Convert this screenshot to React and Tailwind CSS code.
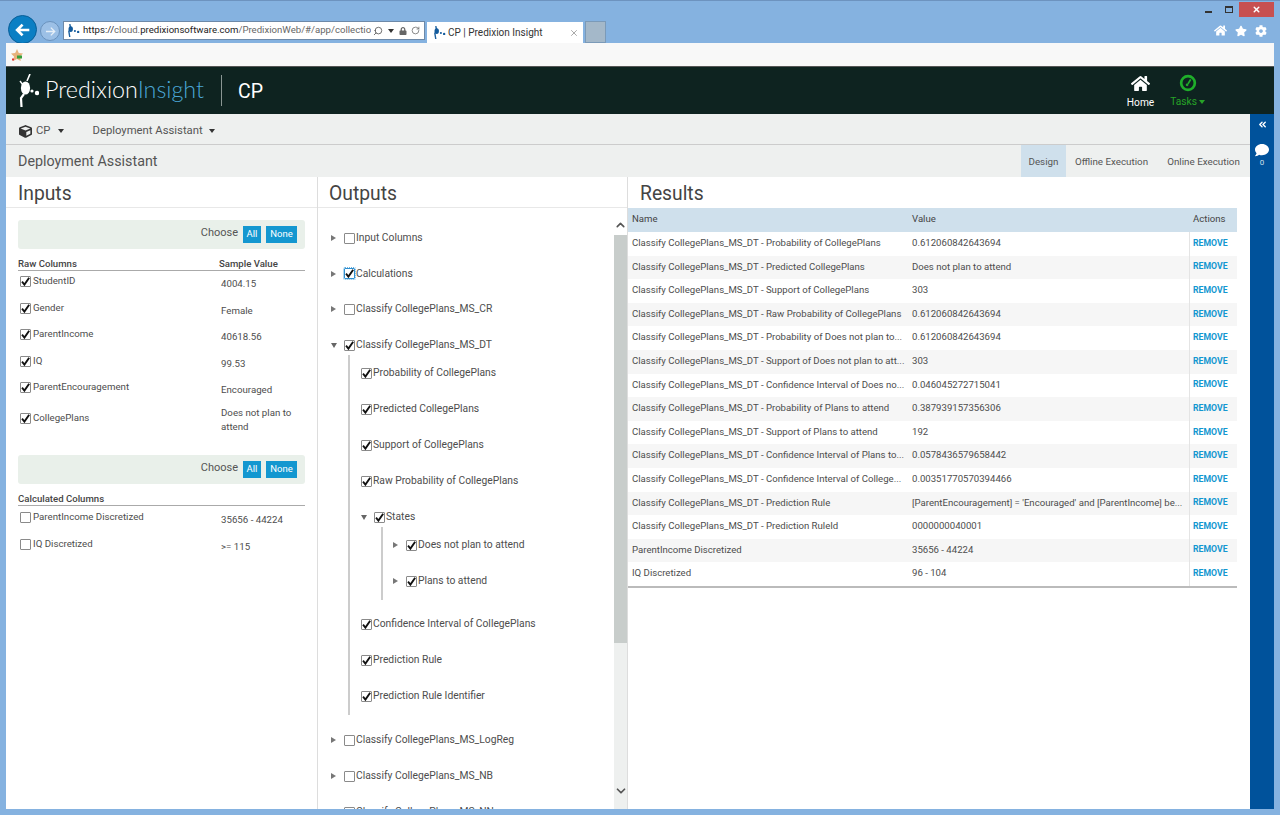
import React from "react";
import { ChevronUp, ChevronDown, ChevronsLeft, RotateCw, Search, X } from "lucide-react";
import { FaHome, FaStar, FaCog, FaComment, FaCube, FaLock } from "react-icons/fa";

const Check = ({ checked, focus }) => (
  <span className={`inline-flex shrink-0 w-[11px] h-[11px] border rounded-[1px] bg-white items-center justify-center ${focus ? "border-[#2f8fd0] outline outline-1 outline-dotted outline-[#6ab0de]" : "border-[#8a8a8a]"}`}>
    {checked && (
      <svg viewBox="0 0 12 12" className="w-[11px] h-[11px] overflow-visible">
        <path d="M2.2 6.2 L4.8 9.4 L10 1.8" fill="none" stroke="#111" strokeWidth="2" />
      </svg>
    )}
  </span>
);

const Logo = ({ small }) => small ? (
  <svg viewBox="0 0 14 14" className="w-[13px] h-[13px] shrink-0">
    <path d="M3 0 L4 5 L2 8 L3 14" stroke="#1b5f9e" strokeWidth="1.5" fill="none" />
    <ellipse cx="4" cy="5.5" rx="2.4" ry="3.2" fill="#125a9c" />
    <circle cx="8.5" cy="7.5" r="1.1" fill="#125a9c" />
    <circle cx="12" cy="8.5" r="1.3" fill="#125a9c" />
  </svg>
) : (
  <svg viewBox="0 0 20 34" className="w-[20px] h-[34px] shrink-0">
    <path d="M11 0 L8 7" stroke="#fff" strokeWidth="1.6" />
    <path d="M1 7 L4 11" stroke="#fff" strokeWidth="1.4" />
    <ellipse cx="6.5" cy="14" rx="4.6" ry="6.6" fill="#fff" />
    <path d="M5 20 L2 24 L2.5 33" stroke="#fff" strokeWidth="2.2" fill="none" />
    <circle cx="13" cy="17" r="1.6" fill="#fff" />
    <circle cx="18" cy="19" r="2.2" fill="#fff" />
  </svg>
);

const Tri = ({ open }) => (
  <span className={`inline-block w-0 h-0 ${open ? "border-l-[3px] border-r-[3px] border-t-[5px] border-l-transparent border-r-transparent border-t-[#666]" : "border-t-[3px] border-b-[3px] border-l-[5px] border-t-transparent border-b-transparent border-l-[#777]"}`} />
);

const Caret = () => <span className="inline-block w-0 h-0 border-l-[3.5px] border-r-[3.5px] border-t-[4px] border-l-transparent border-r-transparent border-t-[#333]" />;

const raw = [
  ["StudentID", "4004.15", "h-[26.5px]"],
  ["Gender", "Female", "h-[26.5px]"],
  ["ParentIncome", "40618.56", "h-[26.5px]"],
  ["IQ", "99.53", "h-[26.5px]"],
  ["ParentEncouragement", "Encouraged", "h-[31px]"],
  ["CollegePlans", "Does not plan to attend", "h-[38px]", true],
];

const InputRow = ({ name, val, h, checked = true, raised }) => (
  <div className={`flex ${h}`}>
    <div className="w-[201px] flex gap-[2px] pl-[2px] text-[9.7px] leading-[12px] text-[#4d4d4d] items-start pt-[4px]">
      <span className="pt-[1px] flex"><Check checked={checked} /></span>
      <span>{name}</span>
    </div>
    <div className={`w-[84px] text-[9.7px] leading-[14px] text-[#4d4d4d] pl-[2px] ${raised ? "-mt-[2px]" : "pt-[6px]"}`}>{val}</div>
  </div>
);

const Choose = ({ className }) => (
  <div className={`h-[29px] rounded-[3px] bg-[#e9f0ea] flex items-center justify-end gap-[5px] pr-[8px] ${className}`}>
    <span className="text-[11px] text-[#555] -mt-[3px]">Choose</span>
    <span className="h-[17px] w-[18px] bg-[#1397d0] text-white text-[9.5px] flex items-center justify-center">All</span>
    <span className="h-[17px] w-[31px] bg-[#1397d0] text-white text-[9.5px] flex items-center justify-center">None</span>
  </div>
);

const Item = ({ h = "h-[36px]", pl = "pl-[13px]", tri, open, checked, focus, label }) => (
  <div className={`flex items-center ${h} ${pl} text-[10.3px] text-[#4d4d4d]`}>
    {tri !== undefined && <span className="w-[13px] flex items-center">{tri && <Tri open={open} />}</span>}
    <Check checked={checked} focus={focus} />
    <span className="ml-[1px] whitespace-nowrap">{label}</span>
  </div>
);

const rows = [
  ["Classify CollegePlans_MS_DT - Probability of CollegePlans", "0.612060842643694"],
  ["Classify CollegePlans_MS_DT - Predicted CollegePlans", "Does not plan to attend"],
  ["Classify CollegePlans_MS_DT - Support of CollegePlans", "303"],
  ["Classify CollegePlans_MS_DT - Raw Probability of CollegePlans", "0.612060842643694"],
  ["Classify CollegePlans_MS_DT - Probability of Does not plan to...", "0.612060842643694"],
  ["Classify CollegePlans_MS_DT - Support of Does not plan to att...", "303"],
  ["Classify CollegePlans_MS_DT - Confidence Interval of Does no...", "0.046045272715041"],
  ["Classify CollegePlans_MS_DT - Probability of Plans to attend", "0.387939157356306"],
  ["Classify CollegePlans_MS_DT - Support of Plans to attend", "192"],
  ["Classify CollegePlans_MS_DT - Confidence Interval of Plans to...", "0.0578436579658442"],
  ["Classify CollegePlans_MS_DT - Confidence Interval of College...", "0.00351770570394466"],
  ["Classify CollegePlans_MS_DT - Prediction Rule", "[ParentEncouragement] = 'Encouraged' and [ParentIncome] be..."],
  ["Classify CollegePlans_MS_DT - Prediction RuleId", "0000000040001"],
  ["ParentIncome Discretized", "35656 - 44224"],
  ["IQ Discretized", "96 - 104"],
];

export default function App() {
  return (
    <div className="w-[1280px] h-[815px] overflow-hidden bg-[#85b2e0] flex flex-col font-['Roboto',sans-serif]">
      {/* browser chrome */}
      <div className="h-[43px] flex shrink-0 pl-[8px] pr-[6px] overflow-hidden border-t border-[#6d93bf]">
        <div className="flex items-end">
          <div className="w-[29px] h-[29px] -mb-[1px] rounded-full bg-[#0b7fc4] border border-[#0a5f98] flex items-center justify-center">
            <svg viewBox="0 0 20 20" className="w-[18px] h-[18px]"><path d="M17 10 H4 M9.5 4 L3.5 10 L9.5 16" stroke="#fff" strokeWidth="3" fill="none" /></svg>
          </div>
          <div className="ml-[3px] mb-[2px] w-[20px] h-[20px] rounded-full bg-[#9cc0e6] border border-[#6a92bd] flex items-center justify-center">
            <svg viewBox="0 0 20 20" className="w-[13px] h-[13px]"><path d="M3 10 H16 M10.5 4 L16.5 10 L10.5 16" stroke="#e8f0f8" strokeWidth="2" fill="none" /></svg>
          </div>
        </div>
        <div className="flex items-end ml-[3px]">
          <div className="w-[362px] h-[19px] mb-[3px] bg-white border border-[#6d89a8] flex items-center pl-[3px] text-[9.6px] text-[#666] whitespace-nowrap overflow-hidden">
            <Logo small />
            <span className="ml-[3px] w-[288px] overflow-hidden shrink-0"><span className="text-[#222]">https://</span>cloud.<span className="text-[#222]">predixionsoftware.com</span>/PredixionWeb/#/app/collection</span>
            <Search size={10} className="ml-[2px] shrink-0 -scale-x-100 text-[#555]" />
            <span className="ml-[5px] flex"><Caret /></span>
            <FaLock size={8} className="ml-[5px] shrink-0 text-[#666]" />
            <RotateCw size={9} className="ml-[4px] shrink-0 text-[#666]" />
          </div>
          <div className="ml-[2px] w-[156px] h-[21px] bg-white flex items-center pl-[6px] pr-[4px] text-[10px] text-[#333] whitespace-nowrap">
            <Logo small />
            <span className="ml-[2px] flex-1">CP | Predixion Insight</span>
            <X size={10} className="text-[#999]" />
          </div>
          <div className="ml-[2px] w-[21px] h-[22px] bg-[#a4b8c9] border border-[#7b9ab8]" />
        </div>
        <div className="flex-1 flex flex-col items-end">
          <div className="flex items-center h-[16px]">
            <span className="w-[7px] h-[2px] bg-[#333] mt-[6px]" />
            <span className="ml-[13px] w-[8px] h-[7px] border border-[#333] border-t-2" />
            <span className="ml-[6px] w-[35px] h-[15px] bg-[#c75050] flex items-center justify-center">
              <X size={9} strokeWidth={4} className="text-white" />
            </span>
          </div>
          <div className="flex items-center gap-[8px] mt-[7px] mr-[7px] text-white">
            <FaHome size={13} />
            <FaStar size={12} />
            <FaCog size={12} />
          </div>
        </div>
      </div>

      <div className="flex-1 flex flex-col min-h-0 mx-[6px]">
        {/* favorites bar */}
        <div className="h-[23px] shrink-0 bg-[#f8f8f8] flex items-center pl-[5px]">
          <svg viewBox="0 0 12 12" className="w-[12px] h-[12px]">
            <path d="M6 0 L7.8 4 L12 4.5 L9 7.5 L9.8 12 L6 10 L2.2 12 L3 7.5 L0 4.5 L4.2 4 Z" fill="#e7b27c" />
            <rect x="6" y="6.5" width="5" height="3" fill="#36a03a" />
            <rect x="1" y="9.5" width="2" height="2" fill="#d33" />
          </svg>
        </div>
        {/* app header */}
        <div className="h-[48px] shrink-0 bg-[#0e2320] border-t border-[#555] flex items-center pl-[13px]">
          <Logo />
          <span className="ml-[6px] pb-[2px] text-[23.3px] font-['Lato',sans-serif] font-light text-white">Predixion<span className="text-[#4aa6d6]">Insight</span></span>
          <span className="ml-[17px] w-px h-[31px] bg-[#8a9693]" />
          <span className="ml-[16px] pt-[2px] text-[19.5px] text-white">CP</span>
          <div className="ml-auto flex gap-[16px] mr-[69px] pt-[3px] text-[10.2px] items-center">
            <div className="flex flex-col items-center text-white">
              <FaHome size={19} />
              <span className="mt-[2px]">Home</span>
            </div>
            <div className="flex flex-col items-center text-[#27a327]">
              <svg viewBox="0 0 20 20" className="w-[18px] h-[18px]">
                <circle cx="10" cy="10" r="7.6" fill="none" stroke="#1fae2a" strokeWidth="3" />
                <path d="M10 11 L13 6" stroke="#1fae2a" strokeWidth="2" />
                <circle cx="9" cy="12" r="1.5" fill="#1fae2a" />
              </svg>
              <span className="flex items-center gap-[2px] mt-[2px]">Tasks <span className="inline-block w-0 h-0 border-l-[3.5px] border-r-[3.5px] border-t-[4px] border-l-transparent border-r-transparent border-t-[#27a327]" /></span>
            </div>
          </div>
        </div>
        {/* body with right rail */}
        <div className="flex-1 min-h-0 flex">
          <div className="flex-1 min-w-0 flex flex-col">
            <div className="h-[31px] shrink-0 bg-[#eef0ef] border-b border-[#ccc] flex items-center pl-[13px] pt-[4px] text-[11.3px] text-[#555]">
              <FaCube size={13} className="text-[#333]" />
              <span className="ml-[4px]">CP</span>
              <span className="ml-[8px] flex"><Caret /></span>
              <span className="ml-[28px]">Deployment Assistant</span>
              <span className="ml-[6px] flex"><Caret /></span>
            </div>
            <div className="h-[32px] shrink-0 bg-[#eef0ef] flex items-center pl-[12px] pr-0 text-[#555]">
              <span className="text-[14.3px] pt-[1px]">Deployment Assistant</span>
              <div className="ml-auto flex h-full text-[9.8px] pt-0">
                <span className="w-[45px] bg-[#cfe0ec] flex items-center justify-center pt-[2px]">Design</span>
                <span className="w-[91px] flex items-center justify-center pt-[2px]">Offline Execution</span>
                <span className="w-[93px] flex items-center justify-center pt-[2px]">Online Execution</span>
              </div>
            </div>
            <div className="flex-1 min-h-0 flex bg-white">
              {/* Inputs */}
              <div className="w-[312px] shrink-0 border-r border-[#ddd] flex flex-col">
                <div className="h-[31px] shrink-0 border-b border-[#e8e8e8] pl-[12px] pt-[4px] flex items-center text-[19.3px] text-[#444]">Inputs</div>
                <div className="pl-[12px] pr-[12px]">
                  <Choose className="mt-[12px]" />
                  <div className="mt-[9px] h-[13px] flex border-b border-[#aaa] leading-[12px] font-medium text-[#444] text-[9.6px]">
                    <span className="w-[201px]">Raw Columns</span>
                    <span>Sample Value</span>
                  </div>
                  {raw.map(([n, v, h, r]) => <InputRow key={n} name={n} val={v} h={h} raised={r} />)}
                  <Choose className="mt-[9px]" />
                  <div className="mt-[9px] h-[13px] border-b border-[#aaa] text-[9.6px] leading-[12px] font-medium text-[#444]">Calculated Columns</div>
                  <div className="h-[1px]" />
                  <InputRow name="ParentIncome Discretized" val="35656 - 44224" h="h-[27px]" checked={false} />
                  <InputRow name="IQ Discretized" val=">= 115" h="h-[27px]" checked={false} />
                </div>
              </div>
              {/* Outputs */}
              <div className="w-[310px] shrink-0 border-r border-[#ddd] flex flex-col min-h-0">
                <div className="h-[31px] shrink-0 border-b border-[#e8e8e8] pl-[11px] pt-[4px] flex items-center text-[19.3px] text-[#444]">Outputs</div>
                <div className="flex-1 min-h-0 flex">
                  <div className="flex-1 min-w-0 overflow-hidden pt-[12px]">
                    <Item tri label="Input Columns" h="h-[36px]" />
                    <Item tri checked focus label="Calculations" h="h-[35px]" />
                    <Item tri label="Classify CollegePlans_MS_CR" h="h-[36px]" />
                    <Item tri open checked label="Classify CollegePlans_MS_DT" h="h-[36px]" />
                    <div className="ml-[30px] border-l-2 border-[#ccc] h-[360px] pl-[11px] -mt-[8px]">
                      <div className="-mt-[2px]">
                        <Item pl="pl-0" checked label="Probability of CollegePlans" />
                        <Item pl="pl-0" checked label="Predicted CollegePlans" />
                        <Item pl="pl-0" checked label="Support of CollegePlans" />
                        <Item pl="pl-0" checked label="Raw Probability of CollegePlans" />
                        <Item pl="pl-0" tri open checked label="States" />
                        <div className="ml-[20px] border-l-2 border-[#ccc] h-[73px] pl-[10px] -mt-[8px]">
                          <Item pl="pl-0" tri checked label="Does not plan to attend" />
                          <Item pl="pl-0" tri checked label="Plans to attend" />
                        </div>
                        <div className="h-[6px]" />
                        <Item pl="pl-0" checked label="Confidence Interval of CollegePlans" />
                        <Item pl="pl-0" checked label="Prediction Rule" />
                        <Item pl="pl-0" checked label="Prediction Rule Identifier" />
                      </div>
                    </div>
                    <div className="h-[7px]" />
                    <Item tri label="Classify CollegePlans_MS_LogReg" />
                    <Item tri label="Classify CollegePlans_MS_NB" />
                    <Item tri label="Classify CollegePlans_MS_NN" />
                  </div>
                  <div className="w-[13px] shrink-0 bg-[#eef0ef] flex flex-col items-center">
                    <div className="h-[27px] w-full bg-white flex items-center justify-center pt-[7px]"><ChevronUp size={14} strokeWidth={3} className="text-[#555]" /></div>
                    <div className="h-[408px] w-full bg-[#c8cdcb]" />
                    <div className="flex-1" />
                    <div className="h-[25px] flex items-start justify-center"><ChevronDown size={14} strokeWidth={3} className="text-[#555]" /></div>
                  </div>
                </div>
              </div>
              {/* Results */}
              <div className="flex-1 min-w-0 flex flex-col">
                <div className="h-[31px] shrink-0 pl-[12px] pt-[4px] flex items-center text-[19.3px] text-[#444]">Results</div>
                <div className="w-[609px] border-b-2 border-[#bbb]">
                  <div className="flex h-[24px] bg-[#cfe0ec] text-[9.6px] text-[#444] items-center pb-[2px]">
                    <span className="w-[280px] pl-[4px]">Name</span>
                    <span className="w-[281px] pl-[4px]">Value</span>
                    <span className="flex-1 pl-[4px]">Actions</span>
                  </div>
                  {rows.map(([n, v], i) => (
                    <div key={n} className={`flex h-[23.6px] items-center text-[9.6px] text-[#4d4d4d] whitespace-nowrap ${i % 2 ? "bg-[#f6f6f6]" : "bg-white"}`}>
                      <span className="w-[280px] pl-[4px] pb-[1px]">{n}</span>
                      <span className="w-[281px] pl-[4px] pb-[1px]">{v}</span>
                      <span className="flex-1 h-full flex items-center border-l border-[#e4e4e4] pl-[3px] pb-[1px] text-[8.7px] font-bold text-[#1397d0]">REMOVE</span>
                    </div>
                  ))}
                </div>
              </div>
            </div>
          </div>
          {/* right rail */}
          <div className="w-[24px] shrink-0 bg-[#00529b] flex flex-col items-center text-white">
            <ChevronsLeft size={11} strokeWidth={3} className="mt-[5px]" />
            <FaComment size={14} className="mt-[13px]" />
            <span className="text-[8px] leading-[10px] mt-[1px] text-[#cfe0ec]">0</span>
          </div>
        </div>
      </div>
      <div className="h-[6px] shrink-0" />
    </div>
  );
}
